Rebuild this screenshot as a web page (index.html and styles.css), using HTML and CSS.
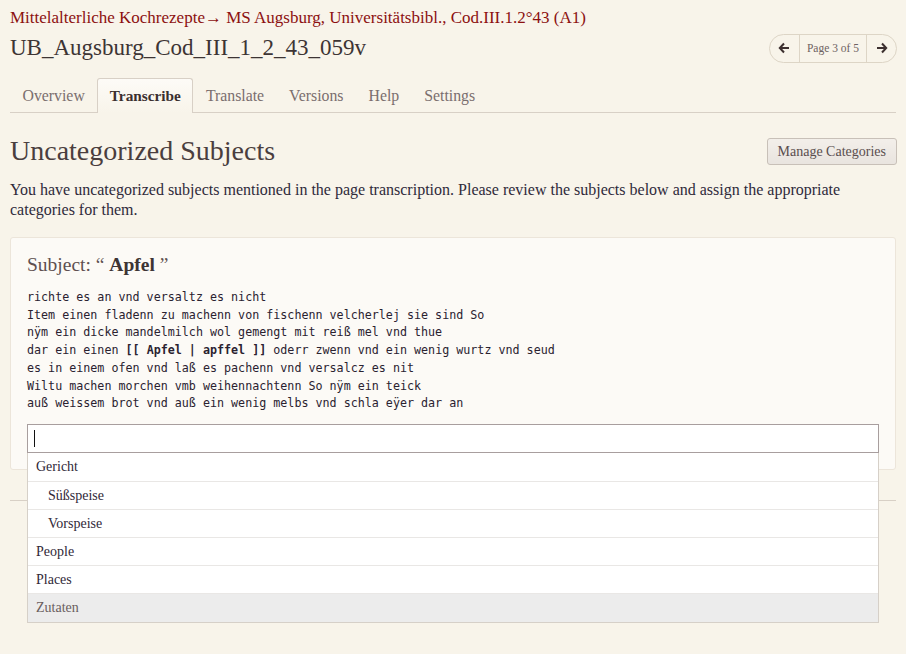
FILE: index.html
```html
<!DOCTYPE html>
<html>
<head>
<meta charset="utf-8">
<link rel="stylesheet" href="styles.css">
</head>
<body>
<div class="page">
  <div class="breadcrumb"><a href="#">Mittelalterliche Kochrezepte</a>→ <a href="#">MS Augsburg, Universitätsbibl., Cod.III.1.2°43 (A1)</a></div>
  <div class="title-row">
    <h1 class="title">UB_Augsburg_Cod_III_1_2_43_059v</h1>
    <div class="pager">
      <span class="pager-btn"><svg width="12" height="12" viewBox="0 0 12 12"><path d="M6 1.5 L1.8 6 L6 10.5 M2 6 H11" fill="none" stroke="#3d3030" stroke-width="2"/></svg></span>
      <span class="pager-label">Page 3 of 5</span>
      <span class="pager-btn"><svg width="12" height="12" viewBox="0 0 12 12"><path d="M6 1.5 L10.2 6 L6 10.5 M10 6 H1" fill="none" stroke="#3d3030" stroke-width="2"/></svg></span>
    </div>
  </div>
  <nav class="tabs">
    <a class="tab">Overview</a>
    <a class="tab active">Transcribe</a>
    <a class="tab">Translate</a>
    <a class="tab">Versions</a>
    <a class="tab">Help</a>
    <a class="tab">Settings</a>
  </nav>
  <div class="section-head">
    <h2 class="section-title">Uncategorized Subjects</h2>
    <button class="btn">Manage Categories</button>
  </div>
  <p class="intro">You have uncategorized subjects mentioned in the page transcription. Please review the subjects below and assign the appropriate categories for them.</p>
  <div class="card">
    <h3 class="subject">Subject: “ <b>Apfel</b> ”</h3>
<pre class="text">richte es an vnd versaltz es nicht
Item einen fladenn zu machenn von fischenn velcherlej sie sind So
nÿm ein dicke mandelmilch wol gemengt mit reiß mel vnd thue
dar ein einen <b>[[ Apfel | apffel ]]</b> oderr zwenn vnd ein wenig wurtz vnd seud
es in einem ofen vnd laß es pachenn vnd versalcz es nit
Wiltu machen morchen vmb weihennachtenn So nÿm ein teick
auß weissem brot vnd auß ein wenig melbs vnd schla eÿer dar an</pre>
    <div class="combo">
      <div class="input"><span class="caret"></span></div>
      <ul class="menu">
        <li>Gericht</li>
        <li class="sub">Süßspeise</li>
        <li class="sub">Vorspeise</li>
        <li>People</li>
        <li>Places</li>
        <li class="hl">Zutaten</li>
      </ul>
    </div>
  </div>
  <hr class="rule">
</div>
</body>
</html>
```
FILE: styles.css
```css
* { box-sizing: border-box; }
html, body { margin: 0; padding: 0; background: #f8f4ea; }
body { font-family: "Liberation Serif", "DejaVu Serif", serif; color: #3d3434; min-height: 654px; }
.page { padding: 7px 10px 0 10px; min-height: 654px; }
.breadcrumb { font-size: 17px; line-height: 22px; color: #8c1010; }
.breadcrumb a { color: #8c1010; text-decoration: none; }
.title-row { display: flex; align-items: center; justify-content: space-between; margin-top: 2px; }
.title { margin: 0; font-size: 23px; font-weight: normal; line-height: 34px; color: #3d3434; }
.pager { display: flex; align-items: stretch; height: 29px; border: 1px solid #ddd5c6; border-radius: 15px; overflow: hidden; margin-right: -1px; }
.pager-btn { width: 29px; display: flex; align-items: center; justify-content: center; }
.pager-label { display: flex; align-items: center; padding: 0 7px; font-size: 11.5px; color: #6e6262; border-left: 1px solid #ddd5c6; border-right: 1px solid #ddd5c6; }
.tabs { display: flex; margin-top: 13px; border-bottom: 1px solid #d8d0c6; height: 35px; }
.tab { display: block; padding: 0 11.5px; font-size: 15.8px; line-height: 34px; color: #7a6e6e; border: 1px solid transparent; border-bottom: none; }
.tab.active { color: #3a2f2f; font-weight: bold; font-size: 15.3px; background: linear-gradient(#fdfbf7, #f8f4ea); border-color: #d8d0c6; border-radius: 3px 3px 0 0; margin-bottom: -1px; height: 35px; }
.section-head { display: flex; justify-content: space-between; align-items: flex-start; margin-top: 22px; }
.section-title { margin: 0; font-size: 28px; font-weight: normal; line-height: 32px; color: #4a3e3e; }
.btn { margin-top: 3px; font-family: inherit; font-size: 14px; color: #5a4e4e; background: linear-gradient(#f3efea, #e9e4df); border: 1px solid #c8c0b8; border-radius: 3px; height: 27px; padding: 0 10px; margin-right: -1px; }
.intro { margin: 13px 0 0 0; font-size: 16px; line-height: 20px; color: #2f2a3a; }
.card { margin-top: 17px; background: #fcfaf6; border: 1px solid #ece5da; border-radius: 3px; padding: 14px 16px 16px 16px; height: 233px; position: relative; }
.subject { margin: 0; font-size: 19.5px; font-weight: normal; line-height: 26px; color: #5e5050; }
.subject b { color: #3d3434; font-weight: bold; }
.text { margin: 11px 0 0 0; font-family: "DejaVu Sans Mono", "Liberation Mono", monospace; font-size: 11.7px; line-height: 17.7px; color: #2a2230; }
.text b { font-weight: bold; }
.combo { position: absolute; left: 16px; right: 16px; top: 186px; z-index: 2; }
.input { height: 29px; background: #fff; border: 1px solid #a89e9e; display: flex; align-items: center; padding-left: 6px; }
.caret { width: 1px; height: 17px; background: #111; }
.menu { list-style: none; margin: 0; padding: 0; background: #fff; border: 1px solid #d6d0c8; border-top: none; }
.menu li { height: 28.1px; line-height: 28px; padding-left: 8px; font-size: 14px; color: #302838; border-top: 1px solid #e9e7e5; }
.menu li:first-child { border-top: none; }
.menu li.sub { padding-left: 20px; }
.menu li.hl { background: #ececec; color: #6a5e5e; }
.rule { border: none; border-top: 1px solid #d8d0c6; margin: 30px 0 0 0; }
```
